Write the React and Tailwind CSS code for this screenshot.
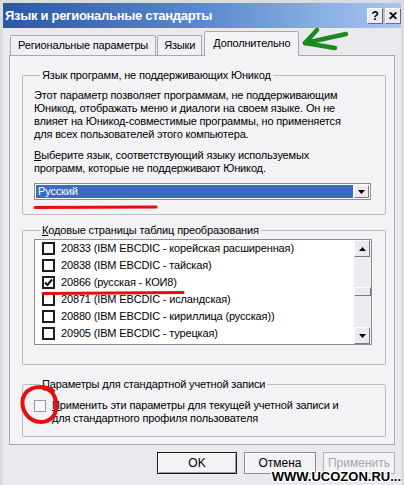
import React from "react";

const rows = [
  { t: "20833 (IBM EBCDIC - корейская расширенная)", c: false },
  { t: "20838 (IBM EBCDIC - тайская)", c: false },
  { t: "20866 (русская - КОИ8)", c: true },
  { t: "20871 (IBM EBCDIC - исландская)", c: false },
  { t: "20880 (IBM EBCDIC - кириллица (русская))", c: false },
  { t: "20905 (IBM EBCDIC - турецкая)", c: false },
];

function TitleBtn({ children }) {
  return (
    <div className="w-[16px] h-[16px] bg-[#eceaef] border border-t-white border-l-white border-b-[#6b6b70] border-r-[#6b6b70] flex items-center justify-center text-[12px] font-bold leading-none text-black">
      {children}
    </div>
  );
}

function ScrollBtn({ up }) {
  return (
    <div className="w-[16px] h-[17px] bg-[#eceaef] border border-t-white border-l-white border-b-[#7a7a80] border-r-[#7a7a80] flex items-center justify-center">
      <svg width="7" height="4" viewBox="0 0 7 4">
        {up ? <path d="M0 4 L3.5 0 L7 4 Z" fill="#000" /> : <path d="M0 0 L3.5 4 L7 0 Z" fill="#000" />}
      </svg>
    </div>
  );
}

export default function App() {
  return (
    <div className="relative w-[404px] h-[485px] overflow-hidden bg-[#ebe9ed] font-['Liberation_Sans',Arial,sans-serif] text-[11px] leading-[13px] tracking-[-0.15px] text-black border-x-[3px] border-[#dcdbe2]">
      {/* title bar */}
      <div className="h-[28px] border-t-[3px] border-[#dcdbe2] bg-gradient-to-r from-[#2a58a5] via-[#5a89cf] to-[#a9c7ef] flex items-center justify-between pl-[2px]">
        <span className="text-white font-bold text-[13px] tracking-[-0.3px]">Язык и региональные стандарты</span>
        <div className="flex gap-[2px]">
          <TitleBtn>?</TitleBtn>
          <TitleBtn>✕</TitleBtn>
        </div>
      </div>

      <div className="pl-[6px] pr-[4px]">
        {/* tabs */}
        <div className="flex items-end h-[27px] pl-[1px]">
          <div className="h-[20px] px-[7px] flex items-center border border-b-0 border-[#a7a9ad] bg-[#f0eff3] rounded-t-[2px] whitespace-nowrap">
            Региональные параметры
          </div>
          <div className="h-[20px] px-[6px] ml-[1px] flex items-center border border-b-0 border-[#a7a9ad] bg-[#f0eff3] rounded-t-[2px]">
            Языки
          </div>
          <div className="relative z-10 -mb-[1px] h-[25px] px-[8px] ml-[2px] flex items-center pb-[2px] border border-b-0 border-[#a7a9ad] bg-[#f3f2f5] rounded-t-[2px]">
            Дополнительно
          </div>
        </div>

        {/* pane */}
        <div className="h-[390px] w-[386px] border border-[#a7a9ad] bg-[#f3f2f5] pl-[12px] pr-[8px] pt-[13px]">
          {/* group 1 */}
          <fieldset className="border border-[#bdbbc2] rounded-[2px] pl-[11px] pr-[14px] pb-[14px]">
            <legend className="ml-[6px] px-[2px]">Язык программ, не поддерживающих Юникод</legend>
            <p className="mt-[7px] w-[322px]">
              Этот параметр позволяет программам, не поддерживающим Юникод, отображать меню и диалоги на своем языке. Он не влияет на Юникод-совместимые программы, но применяется для всех пользователей этого компьютера.
            </p>
            <p className="mt-[8px] w-[322px] first-letter:underline">
              Выберите язык, соответствующий языку используемых программ, которые не поддерживают Юникод.
            </p>
            <div className="mt-[8px] h-[17px] w-[337px] border border-[#8a8d93] bg-white p-[1px] flex">
              <div className="flex-1 bg-[#3a6cc2] text-white pl-[2px] flex items-center">Русский</div>
              <div className="w-[15px] ml-[1px] bg-[#eceaef] border border-t-white border-l-white border-b-[#7a7a80] border-r-[#7a7a80] flex items-center justify-center">
                <svg width="7" height="4" viewBox="0 0 7 4"><path d="M0 0 L3.5 4 L7 0 Z" fill="#000" /></svg>
              </div>
            </div>
          </fieldset>

          {/* group 2 */}
          <fieldset className="mt-[9px] border border-[#bdbbc2] rounded-[2px] pl-[11px] pr-[13px] pb-[19px]">
            <legend className="ml-[6px] px-[2px] first-letter:underline">Кодовые страницы таблиц преобразования</legend>
            <div className="mt-[2px] w-[338px] h-[106px] border border-[#8a8d93] bg-white flex">
              <div className="flex-1 pl-[7px]">
                {rows.map((r) => (
                  <div key={r.t} className="h-[17px] flex items-center">
                    <div className="w-[13px] h-[13px] border-2 border-[#1e1e1e] bg-white flex items-center justify-center">
                      {r.c && (
                        <svg width="9" height="9" viewBox="0 0 9 9">
                          <path d="M1 4.5 L3.5 7 L8 1.5" stroke="#111" strokeWidth="2" fill="none" />
                        </svg>
                      )}
                    </div>
                    <span className="ml-[6px] whitespace-nowrap">{r.t}</span>
                  </div>
                ))}
              </div>
              <div className="w-[17px] flex flex-col bg-[repeating-conic-gradient(#f4f3f6_0_25%,#e6e5ea_0_50%)] bg-[length:2px_2px]">
                <ScrollBtn up />
                <div className="h-[30px]" />
                <div className="h-[9px] bg-[#eceaef] border border-t-white border-l-white border-b-[#7a7a80] border-r-[#7a7a80]" />
                <div className="flex-1" />
                <ScrollBtn />
              </div>
            </div>
          </fieldset>

          {/* group 3 */}
          <fieldset className="mt-[13px] border border-[#bdbbc2] rounded-[2px] pl-[11px] pr-[10px] pt-[8px] pb-[11px]">
            <legend className="ml-[6px] px-[2px]">Параметры для стандартной учетной записи</legend>
            <div className="flex items-start">
              <div className="mt-[1px] w-[12px] h-[12px] border border-[#9a9aa0] bg-[#f7f7f9] shrink-0" />
              <p className="ml-[6px] w-[292px] first-letter:underline">
                Применить эти параметры для текущей учетной записи и для стандартного профиля пользователя
              </p>
            </div>
          </fieldset>
        </div>

        {/* buttons */}
        <div className="flex justify-end gap-[7px] mt-[7px] pr-[2px] tracking-normal">
          <button className="w-[80px] h-[22px] border border-[#1b1b1b] bg-[#f3f2f5] shadow-[inset_1px_1px_0_#fff,inset_-1px_-1px_0_#9a9aa0] text-[12px]">OK</button>
          <button className="w-[72px] h-[22px] border border-[#8d8c92] bg-[#f3f2f5] shadow-[inset_1px_1px_0_#fff] text-[12px]">Отмена</button>
          <button className="w-[72px] h-[22px] border border-[#b5b4ba] bg-[#f3f2f5] text-[12px] text-[#a8a7ad]">Применить</button>
        </div>
      </div>

      {/* annotations */}
      <svg className="absolute left-0 top-0 pointer-events-none" width="404" height="485" viewBox="0 0 404 485">
        <g stroke="#1a8a1f" strokeWidth="4.5" strokeLinecap="round" fill="none">
          <path d="M302 43 L343 34" />
          <path d="M302 43 L314 30" />
          <path d="M302 43 L332 48" />
        </g>
        <path d="M32 207.5 L153 207" stroke="#e3100f" strokeWidth="3" strokeLinecap="round" />
        <path d="M40 293.5 L180 292.5" stroke="#e3100f" strokeWidth="3" strokeLinecap="round" />
        <path d="M50 391 C40 384 24 386 20 398 C17 410 26 422 38 422 C48 422 55 414 53 402 C52 394 47 389 40 388" stroke="#e3100f" strokeWidth="4" fill="none" strokeLinecap="round" />
      </svg>

      {/* watermark */}
      <div className="absolute right-[0px] bottom-[1px] font-['Liberation_Sans',sans-serif] font-black text-[13px] leading-[14px] tracking-[0px] text-black [text-shadow:1px_0_#fff,-1px_0_#fff,0_1px_#fff,0_-1px_#fff,1px_1px_#fff,-1px_-1px_#fff,1px_-1px_#fff,-1px_1px_#fff]">
        WWW.UCOZON.RU...
      </div>
    </div>
  );
}
